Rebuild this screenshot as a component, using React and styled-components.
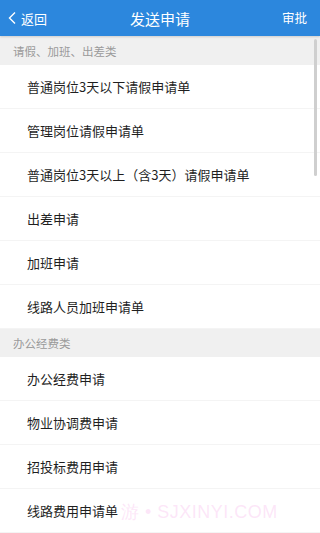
import React from "react";
import styled, { createGlobalStyle } from "styled-components";

const GlobalStyle = createGlobalStyle`
  html, body {
    margin: 0;
    padding: 0;
    background: #ffffff;
    font-family: "Noto Sans CJK SC", "Noto Sans", sans-serif;
  }
  * {
    box-sizing: border-box;
  }
`;

const Page = styled.div`
  width: 320px;
  height: 533px;
  overflow: hidden;
  position: relative;
  display: flex;
  flex-direction: column;
  background: #fff;
`;

const TopBar = styled.header`
  height: 36px;
  flex-shrink: 0;
  background: #2c87dd;
  display: grid;
  grid-template-columns: 80px 1fr 80px;
  align-items: center;
  color: #fff;
  box-shadow: 0 1px 2px rgba(0, 0, 0, 0.15);
  position: relative;
  z-index: 1;
`;

const BackButton = styled.div`
  display: flex;
  align-items: center;
  gap: 2px;
  padding-left: 7px;
  font-size: 13px;
  line-height: 1;
`;

const Title = styled.h1`
  margin: 0;
  text-align: center;
  font-size: 15px;
  font-weight: 400;
  line-height: 1;
`;

const Action = styled.div`
  text-align: right;
  padding-right: 13px;
  font-size: 12.5px;
  line-height: 1;
`;

const List = styled.div`
  flex: 1;
  display: flex;
  flex-direction: column;
`;

const GroupTitle = styled.div`
  height: ${(p) => p.$h}px;
  background: #f0f0f0;
  color: #9a9a9a;
  font-size: 11.5px;
  display: flex;
  align-items: center;
  padding-left: 13px;
`;

const Row = styled.div`
  height: 44px;
  flex-shrink: 0;
  display: flex;
  align-items: center;
  padding-left: 27px;
  font-size: 13px;
  color: #1f1f1f;
  border-bottom: 1px solid #f4f4f4;
`;

const Scrollbar = styled.div`
  position: absolute;
  right: 3px;
  top: 39px;
  width: 3px;
  height: 137px;
  border-radius: 2px;
  background: #cfcfcf;
`;

const Watermark = styled.div`
  position: absolute;
  left: 121px;
  top: 500px;
  font-size: 18px;
  color: rgba(250, 200, 240, 0.45);
  font-family: "Liberation Sans", sans-serif;
  letter-spacing: 0.5px;
  pointer-events: none;
`;

const groups = [
  {
    title: "请假、加班、出差类",
    h: 29,
    items: [
      "普通岗位3天以下请假申请单",
      "管理岗位请假申请单",
      "普通岗位3天以上（含3天）请假申请单",
      "出差申请",
      "加班申请",
      "线路人员加班申请单",
    ],
  },
  {
    title: "办公经费类",
    h: 28,
    items: ["办公经费申请", "物业协调费申请", "招投标费用申请", "线路费用申请单"],
  },
];

export default function App() {
  return (
    <>
      <GlobalStyle />
      <Page>
        <TopBar>
          <BackButton>
            <svg width="12" height="14" viewBox="0 0 12 14" fill="none">
              <path d="M8 1.5 L2.5 7 L8 12.5" stroke="#fff" strokeWidth="1.4" />
            </svg>
            返回
          </BackButton>
          <Title>发送申请</Title>
          <Action>审批</Action>
        </TopBar>
        <List>
          {groups.map((g) => (
            <React.Fragment key={g.title}>
              <GroupTitle $h={g.h}>{g.title}</GroupTitle>
              {g.items.map((it) => (
                <Row key={it}>{it}</Row>
              ))}
            </React.Fragment>
          ))}
        </List>
        <Scrollbar />
        <Watermark>游 • SJXINYI.COM</Watermark>
      </Page>
    </>
  );
}
